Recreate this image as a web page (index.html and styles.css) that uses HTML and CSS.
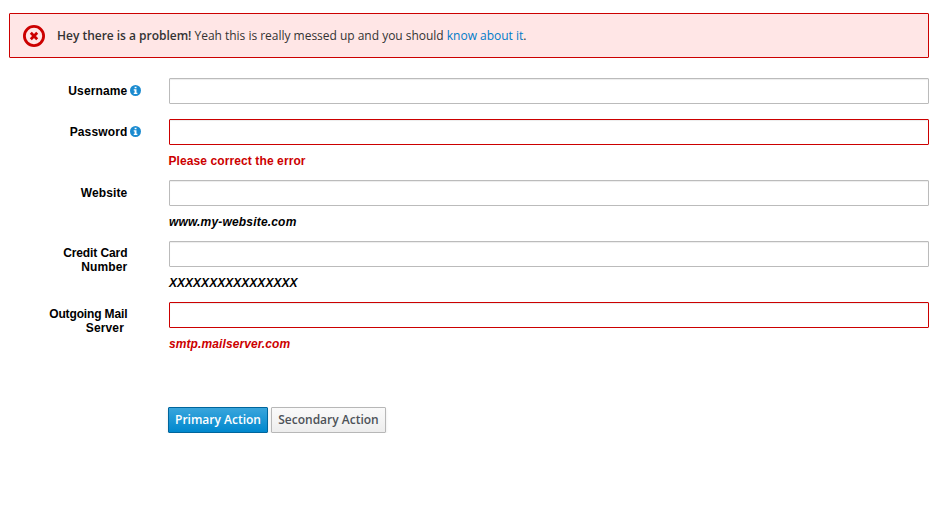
FILE: index.html
```html
<!DOCTYPE html>
<html lang="en">
<head>
<meta charset="utf-8">
<title>Form</title>
<link rel="stylesheet" href="styles.css">
</head>
<body>
<div class="alert">
  <svg class="alert-icon" viewBox="0 0 22 22"><circle cx="11" cy="11" r="9.6"/><path d="M7.8 7.8l6.4 6.4M14.2 7.8l-6.4 6.4"/></svg>
  <p><strong>Hey there is a problem!</strong> Yeah this is really messed up and you should <a href="#">know about it</a>.</p>
</div>
<form class="form">
  <div class="row">
    <label class="label" for="user"><span class="label-text">Username</span><svg class="info" viewBox="0 0 10 10"><circle cx="5" cy="5" r="5"/><path d="M4.2 1.5h1.7v1.5H4.2zM3.4 3.8h2.5v3.2h.8v1.2H3.4V7h.8V5h-.8z"/></svg></label>
    <div class="field"><input id="user" type="text"></div>
  </div>
  <div class="row tall invalid">
    <label class="label" for="pass"><span class="label-text">Password</span><svg class="info" viewBox="0 0 10 10"><circle cx="5" cy="5" r="5"/><path d="M4.2 1.5h1.7v1.5H4.2zM3.4 3.8h2.5v3.2h.8v1.2H3.4V7h.8V5h-.8z"/></svg></label>
    <div class="field"><input id="pass" type="password"><span class="help error">Please correct the error</span></div>
  </div>
  <div class="row tall">
    <label class="label" for="site"><span class="label-text">Website</span></label>
    <div class="field"><input id="site" type="text"><span class="help example web">www.my-website.com</span></div>
  </div>
  <div class="row tall two-line">
    <label class="label" for="card"><span class="label-text"><span class="snug">Credit Card</span><br>Number</span></label>
    <div class="field"><input id="card" type="text"><span class="help example card">XXXXXXXXXXXXXXXX</span></div>
  </div>
  <div class="row tall two-line invalid">
    <label class="label" for="mail"><span class="label-text"><span class="tight">Outgoing Mail</span><br>Server&nbsp;</span></label>
    <div class="field"><input id="mail" type="text"><span class="help example mail">smtp.mailserver.com</span></div>
  </div>
  <div class="actions">
    <button type="button" class="btn primary">Primary Action</button>
    <button type="button" class="btn secondary">Secondary Action</button>
  </div>
</form>
</body>
</html>
```
FILE: styles.css
```css
* { box-sizing: border-box; }
body {
  margin: 0;
  padding: 13px 13px 0 9px;
  background: #fff;
  color: #333;
  font: 12px/20px "Open Sans", sans-serif;
}
.alert {
  display: flex;
  align-items: center;
  height: 45px;
  padding-left: 13px;
  border: 1px solid #c00;
  border-radius: 1px;
  background: #ffe6e6;
}
.alert-icon {
  width: 22px;
  height: 22px;
  margin-right: 12px;
  fill: none;
  stroke: #c00;
  stroke-width: 2.8;
}
.alert p { margin: 0; letter-spacing: -.018px; }
.alert strong { font-weight: 600; }
.alert a { color: #007bc8; text-decoration: none; }
.form { margin-top: 20px; }
.row {
  display: grid;
  grid-template-columns: 118.4px 760px;
  column-gap: 41.6px;
  height: 41px;
}
.tall { height: 61px; }
.label {
  display: flex;
  justify-content: flex-end;
  align-items: flex-start;
  padding-top: 6px;
  color: #000;
  font: bold 12px/14px "Liberation Sans", sans-serif;
  letter-spacing: .13px;
  text-align: right;
}
.two-line .label { padding-top: 5px; }
.tight { letter-spacing: -.14px; }
.snug { letter-spacing: -.1px; }
.info {
  flex: none;
  width: 11px;
  height: 11px;
  margin: 1px -14px 0 3px;
  fill: #1b8bd0;
}
.info path { fill: #fff; }
.field { display: flex; flex-direction: column; align-items: flex-start; }
.field input {
  width: 760px;
  height: 26px;
  margin: 0;
  padding: 2px 6px;
  border: 1px solid #bbb;
  border-radius: 1px;
  background: #fff;
  box-shadow: inset 0 1px 1px rgba(3, 3, 3, .075);
}
.invalid input { border-color: #c00; }
.help {
  margin-top: 9px;
  color: #000;
  font: bold 12px/14px "Liberation Sans", sans-serif;
  letter-spacing: .18px;
}
.error { margin-left: -.5px; letter-spacing: .1px; }
.example { font-style: italic; }
.help.card { letter-spacing: .03px; }
.help.mail { letter-spacing: .1px; }
.invalid .help { color: #c00; }
.actions { display: flex; gap: 3px; margin: 44px 0 0 159px; }
.btn {
  height: 26px;
  padding: 0 6px;
  border: 1px solid #b7b7b7;
  border-radius: 1px;
  background: linear-gradient(#fafafa, #ededed);
  box-shadow: 0 2px 3px rgba(3, 3, 3, .1);
  color: #4d5258;
  font: 600 12px/20px "Open Sans", sans-serif;
}
.primary {
  border-color: #00659c;
  background: linear-gradient(#39a5dc, #0088ce);
  color: #fff;
}
.secondary { width: 115px; padding: 0 5px; }
```
